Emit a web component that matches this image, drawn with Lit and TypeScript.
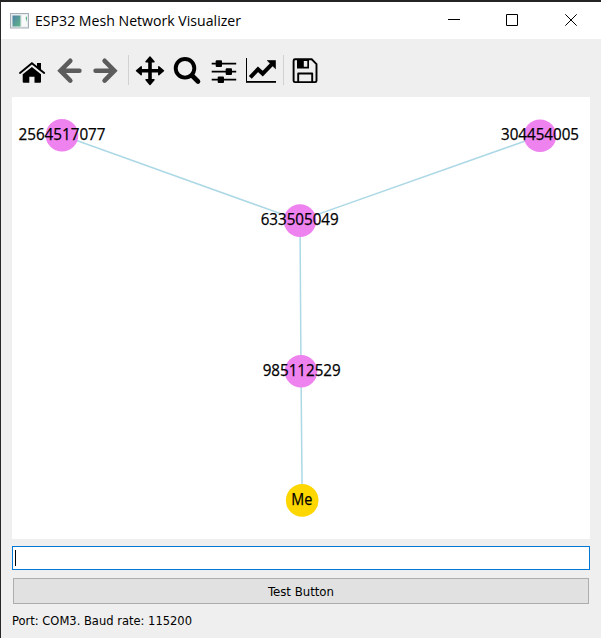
import { LitElement, html, css, svg } from "lit";
import { customElement } from "lit/decorators.js";

const tools = [
  { x: 14, name: "Home", art: svg`
    <path d="M22.700 74.300v7.500q0 1 1 1h5.600v-6.100h5.200v6.100h5.500q1 0 1-1v-7.500L31.900 67z"/><path d="M37 63h4v8.500l-4-3.500z"/>
    <path d="M20 73 31.900 63.200 44.200 73" fill="none" stroke="#000" stroke-width="1.900" stroke-linecap="round"/>` },
  { x: 51, name: "Back", art: svg`
    <path d="M70.300 60.800 60.500 70.700l9.800 9.900M61 70.700H79.400" fill="none" stroke="#5c5c5c" stroke-width="4.600" stroke-linecap="round" stroke-linejoin="miter"/>` },
  { x: 87, name: "Forward", art: svg`
    <path d="M104.600 60.800 114.400 70.700l-9.800 9.900M114 70.700H95.600" fill="none" stroke="#5c5c5c" stroke-width="4.600" stroke-linecap="round" stroke-linejoin="miter"/>` },
  { x: 132, name: "Pan", sep: true, art: svg`
    <path d="M150 59v23.500M139 70.700h22" stroke="#000" stroke-width="3.600"/>
    <path d="m150 57 4 4.700h-8zM150 84.500l-4-4.700h8zM136.500 70.700l4.700-4v8zM163.500 70.700l-4.700-4v8z" stroke="#000" stroke-width="1.400" stroke-linejoin="round"/>` },
  { x: 169, name: "Zoom", art: svg`
    <circle cx="185" cy="68.300" r="9.300" fill="none" stroke="#000" stroke-width="3.900"/>
    <path d="m192 75.500 6 6" stroke="#000" stroke-width="4.600" stroke-linecap="round"/>` },
  { x: 206, name: "Subplots", art: svg`
    <path d="M211.700 63.600h24.500M211.700 71.600h24.500M211.700 79.700h24.500" stroke="#000" stroke-width="1.800"/>
    <rect x="215.700" y="60.300" width="6.300" height="6.600" rx="1"/><rect x="225.700" y="68.300" width="6.300" height="6.600" rx="1"/><rect x="217.700" y="76.400" width="6.300" height="6.600" rx="1"/>` },
  { x: 243, name: "Customize", art: svg`
    <path d="M246.500 58v24" stroke="#000" stroke-width="1"/><path d="M246 81.900h30" stroke="#000" stroke-width="1.800"/>
    <path d="m250.300 77.300 7.700-8 4.700 4.300 9.500-9.800" fill="none" stroke="#000" stroke-width="4"/>
    <path d="M267.200 60.500h8.300v8.300z" stroke="#000" stroke-width=".6"/>` },
  { x: 287, name: "Save", sep: true, art: svg`
    <path d="M295 59.300h16.700l4.800 4.800V80.700q0 1.400-1.400 1.400H295q-1.400 0-1.400-1.400V60.700q0-1.400 1.400-1.400z" fill="none" stroke="#000" stroke-width="1.900"/>
    <path fill-rule="evenodd" d="M297 59h12v9.500h-12zM303.800 61v5.700h3.500V61z"/>
    <path d="M298.200 82v-8.500h14V82" fill="none" stroke="#000" stroke-width="1.900" stroke-linejoin="round"/>` },
];

const nodes = [
  { id: "2564517077", x: 62, y: 135.3, left: 18.5, width: 87, base: 140 },
  { id: "304454005", x: 540, y: 135.8, left: 501, width: 78, base: 140 },
  { id: "633505049", x: 300, y: 220.6, left: 260.7, width: 78, base: 225 },
  { id: "985112529", x: 301, y: 371.3, left: 262.7, width: 78, base: 376 },
  { id: "Me", x: 302.2, y: 500.4, left: 291.3, width: 21, base: 505, me: true },
];
const edges = [[0, 2], [1, 2], [2, 3], [3, 4]];

@customElement("app-root")
export class AppRoot extends LitElement {
  static styles = css`
    :host { display: block; }
    .window {
      box-sizing: border-box; width: 601px; height: 638px; overflow: hidden;
      display: flex; flex-direction: column; background: #efefef; color: #000;
      border-top: 2px solid #252425; border-left: 1px solid #29272a;
    }
    svg { display: block; overflow: visible; }
    .title { height: 37px; flex: none; display: flex; align-items: center; background: #fff; }
    .app-icon { margin: 0 6px 0 9px; }
    .title-text { flex: 1; }
    .controls { display: flex; }
    text { white-space: pre; }
    .title-font { font: 15px "Open Sans", sans-serif; }
    .node-font { font: 16px "Open Sans", sans-serif; stroke: #000; stroke-width: .25px; }
    .ui-font { font: 12.500px "DejaVu Sans Condensed", "DejaVu Sans", sans-serif; }
    .toolbar {
      height: 58px; flex: none; display: grid; align-items: center; padding-left: 13px;
      box-sizing: border-box; grid-template-columns: 37px 36px 45px 37px 37px 37px 44px 36px;
    }
    .tool { position: relative; width: 36px; height: 36px; }
    .sep::before { content: ""; position: absolute; left: -4px; top: 5px; width: 1px; height: 30px; background: #d2d2d2; }
    .content { display: flex; flex-direction: column; padding: 0 11px; }
    .canvas { background: #fff; }
    .entry { height: 24px; box-sizing: border-box; margin-top: 7px; border: 1px solid #0078d7; background: #fff; padding: 3px 2px; }
    .caret { width: 1px; height: 16px; background: #000; }
    .button {
      height: 26px; box-sizing: border-box; margin: 8px 1px 0; border: 1px solid #adadad;
      background: #e1e1e1; display: flex; justify-content: center; align-items: center;
    }
    .status { margin-top: 6px; }
  `;

  render() {
    return html`<div class="window">
      <header class="title">
        <svg class="app-icon" width="19" height="16" viewBox="0 0 19 16">
          <defs><linearGradient id="g" x1="0" y1="0" x2="1" y2="1"><stop stop-color="#5081a6"/><stop offset="1" stop-color="#5fb788"/></linearGradient></defs>
          <rect x=".5" y=".5" width="18" height="14.500" fill="#e9eced" stroke="#a4adb8"/>
          <rect x="2.500" y="2.500" width="8" height="11" fill="url(#g)"/>
          <rect x="12" y="2" width="5" height="11.500" fill="#f8fafa"/>
          <path d="M17 3v6l-1.500-4z" fill="#62b68b"/>
        </svg>
        <div class="title-text"><svg width="215" height="25"><text class="title-font" x="0" y="18" textLength="206" lengthAdjust="spacingAndGlyphs">ESP32 Mesh Network Visualizer</text></svg></div>
        <div class="controls">
          <svg width="175" height="37" viewBox="426 2 175 37" fill="none" stroke="#000">
            <path d="M448 19.500h12M506.500 14.500h11v11h-11z"/><path d="m565.300 14.300 11.400 11.400m0-11.400-11.400 11.400"/>
          </svg>
        </div>
      </header>
      <nav class="toolbar">
        ${tools.map((t) => html`<div class="tool ${t.sep ? "sep" : ""}" aria-label=${t.name}>
          <svg width="36" height="36" viewBox="${t.x} 50 36 36">${t.art}</svg>
        </div>`)}
      </nav>
      <main class="content">
        <svg class="canvas" width="578" height="442" viewBox="12 97 578 442">
          ${edges.map(([a, b]) => svg`<line x1=${nodes[a].x} y1=${nodes[a].y} x2=${nodes[b].x} y2=${nodes[b].y} stroke="#add8e6" stroke-width="1.500"/>`)}
          ${nodes.map((n) => svg`<circle cx=${n.x} cy=${n.y} r="16.300" fill=${n.me ? "#ffd700" : "#ee82ee"}/>`)}
          ${nodes.map((n) => svg`<text class="node-font" x=${n.left} y=${n.base} textLength=${n.width} lengthAdjust="spacingAndGlyphs">${n.id}</text>`)}
        </svg>
        <div class="entry"><div class="caret"></div></div>
        <div class="button"><svg width="66" height="20"><text class="ui-font" x="0" y="15" textLength="66" lengthAdjust="spacingAndGlyphs">Test Button</text></svg></div>
        <svg class="status" width="190" height="20"><text class="ui-font" x="0" y="15" textLength="180" lengthAdjust="spacingAndGlyphs">Port: COM3. Baud rate: 115200</text></svg>
      </main>
    </div>`;
  }
}
